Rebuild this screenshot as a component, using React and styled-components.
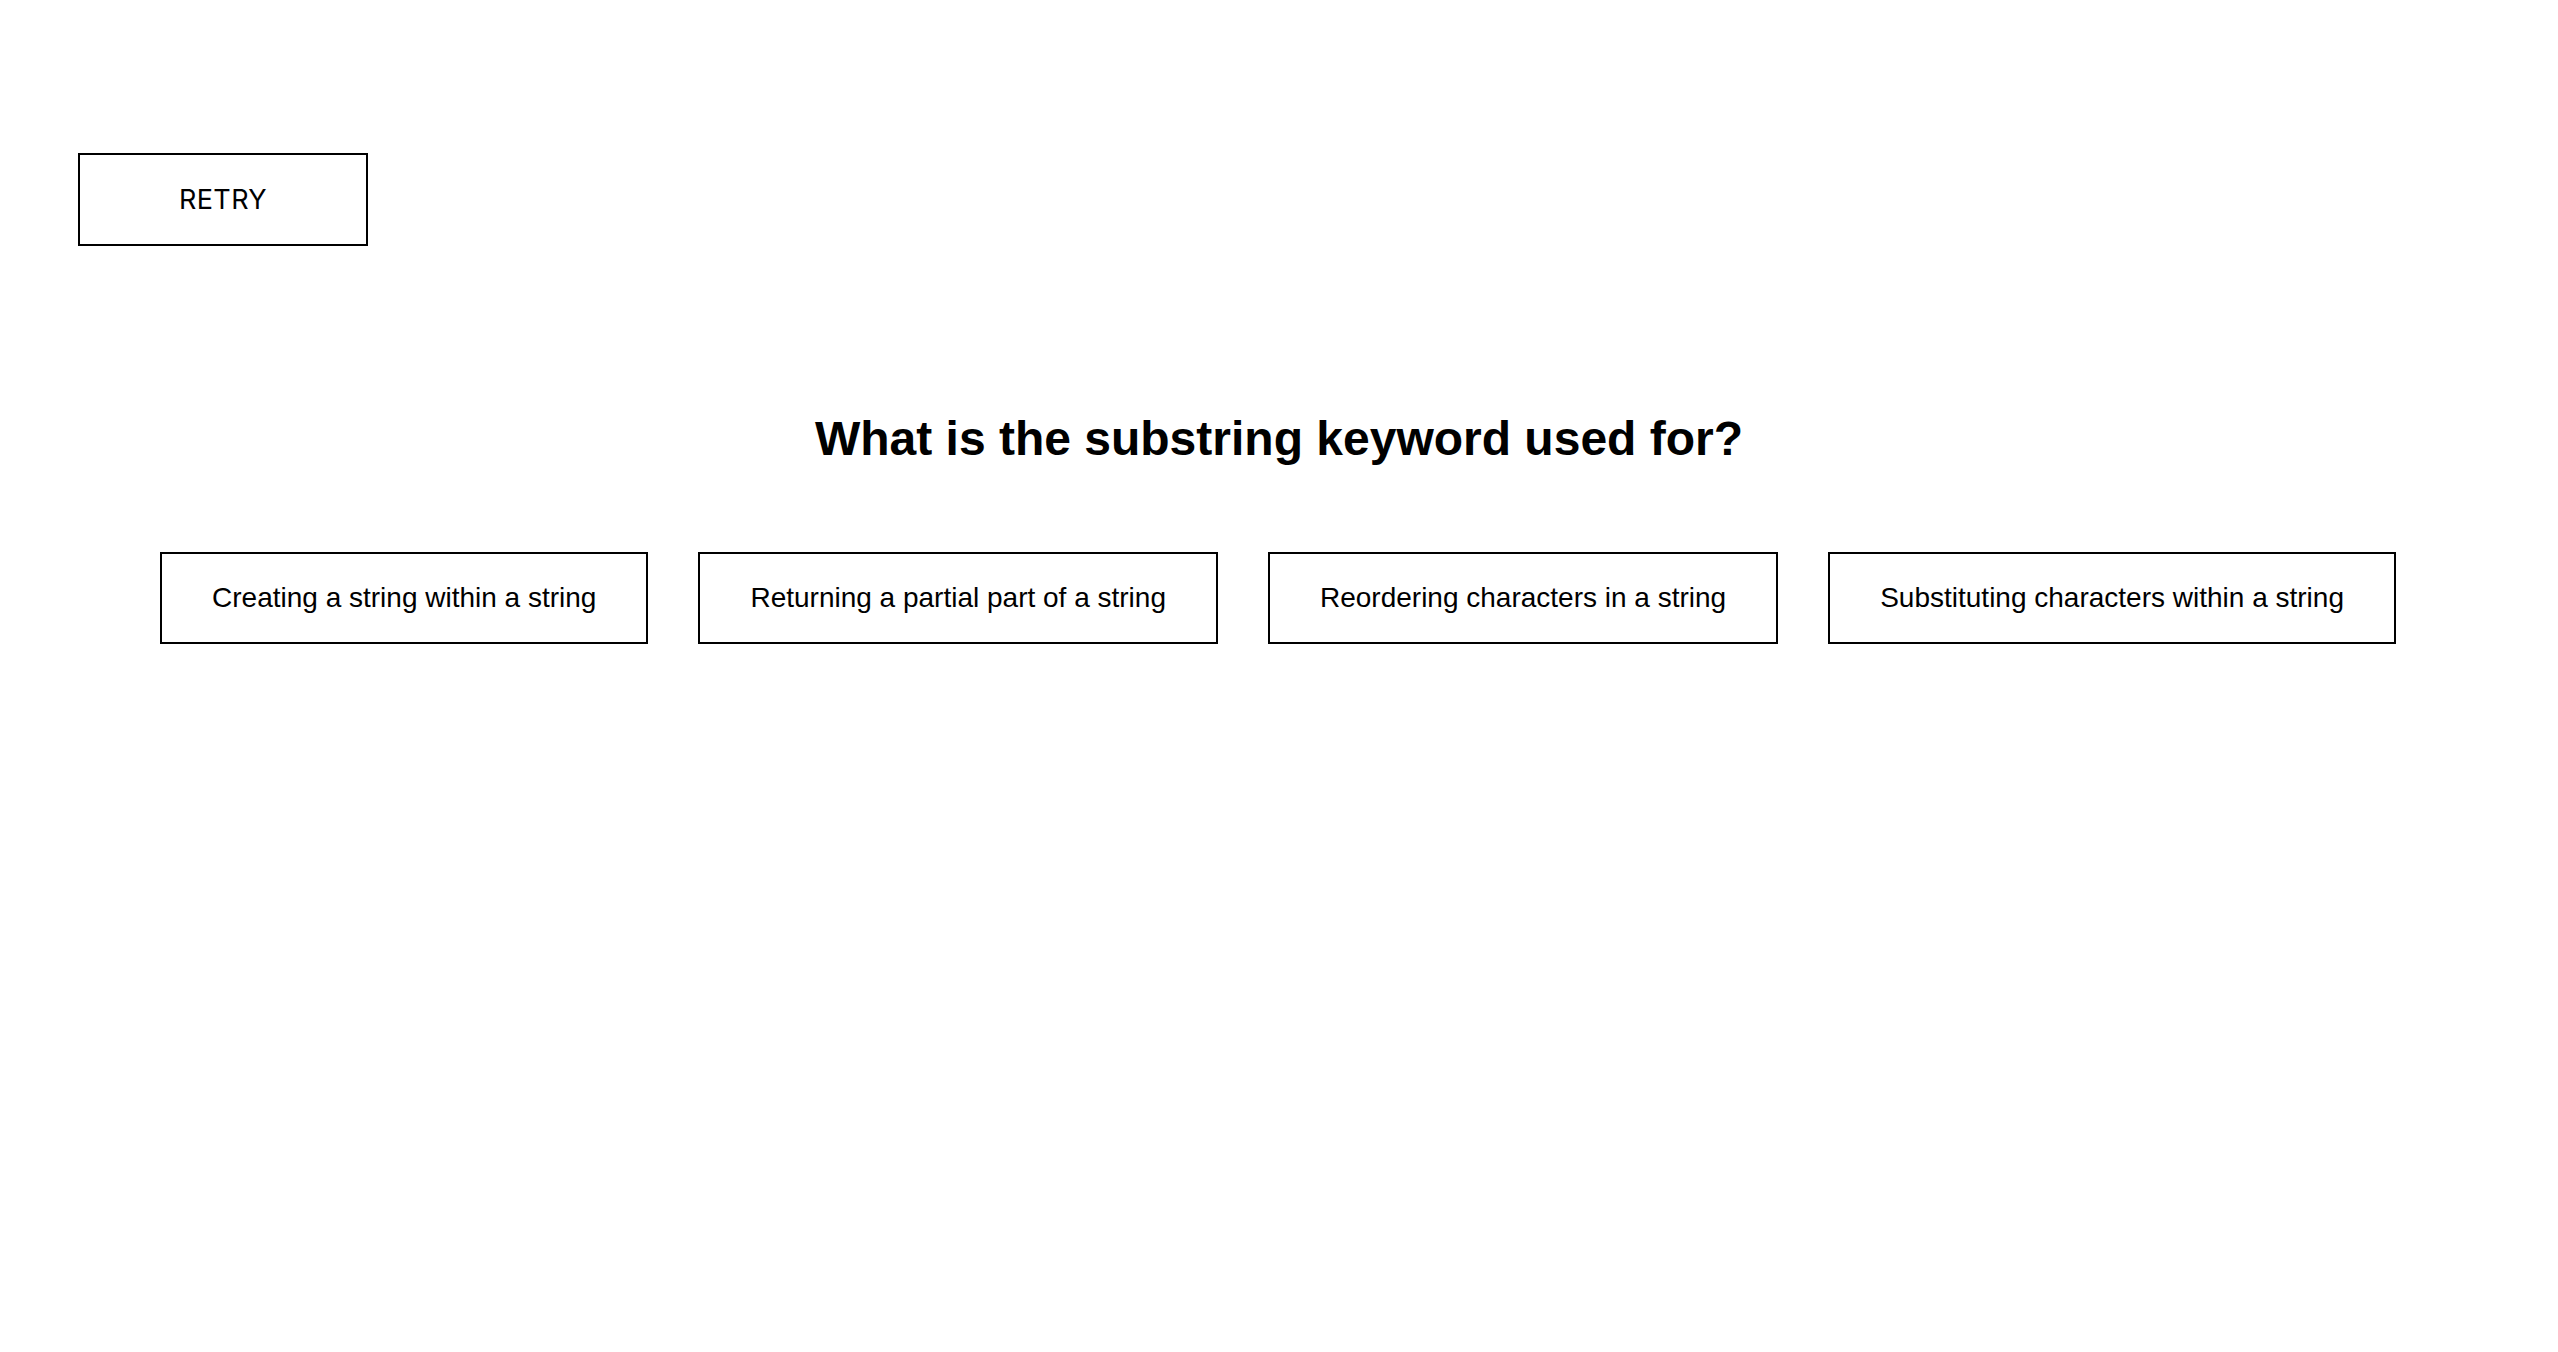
import React from "react";
import styled, { createGlobalStyle } from "styled-components";

const Global = createGlobalStyle`
  html, body {
    margin: 0;
    padding: 0;
    background: #ffffff;
  }
  body {
    font-family: "Liberation Sans", Arial, sans-serif;
    color: #000;
  }
`;

const Page = styled.div`
  display: flex;
  flex-direction: column;
  min-height: 1352px;
  padding-top: 153px;
  box-sizing: border-box;
`;

const TopBar = styled.div`
  display: flex;
  padding-left: 78px;
`;

const RetryButton = styled.button`
  width: 290px;
  height: 93px;
  box-sizing: border-box;
  border: 2px solid #000;
  background: #fff;
  color: #000;
  font-family: Inter, "Liberation Sans", sans-serif;
  font-size: 27px;
  font-weight: 400;
  letter-spacing: 0.4px;
  cursor: pointer;
  padding: 0;
`;

const Question = styled.h1`
  margin: 165px 0 0;
  text-align: center;
  font-family: "Liberation Sans", Arial, sans-serif;
  font-size: 48px;
  font-weight: 700;
  line-height: normal;
`;

const Options = styled.div`
  display: flex;
  justify-content: center;
  gap: 50px;
  margin-top: 86px;
  padding-right: 2px;
`;

const Option = styled.button`
  box-sizing: border-box;
  height: 92px;
  border: 2px solid #000;
  background: #fff;
  color: #000;
  padding: 0 50px;
  font-family: "Liberation Sans", Arial, sans-serif;
  font-size: 28px;
  line-height: 32px;
  white-space: nowrap;
  cursor: pointer;
`;

const answers = [
  "Creating a string within a string",
  "Returning a partial part of a string",
  "Reordering characters in a string",
  "Substituting characters within a string",
];

export default function App() {
  return (
    <>
      <Global />
      <Page>
        <TopBar>
          <RetryButton>RETRY</RetryButton>
        </TopBar>
        <Question>What is the substring keyword used for?</Question>
        <Options>
          {answers.map((a) => (
            <Option key={a}>{a}</Option>
          ))}
        </Options>
      </Page>
    </>
  );
}
